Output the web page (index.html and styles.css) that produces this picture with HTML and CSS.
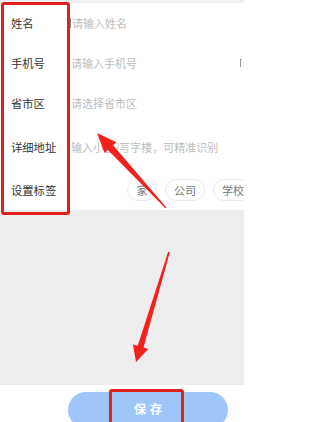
FILE: index.html
```html
<!DOCTYPE html>
<html lang="zh-CN">
<head>
<meta charset="utf-8">
<link rel="stylesheet" href="styles.css">
</head>
<body>
<div class="page">
  <div class="topbar"></div>
  <div class="form">
    <div class="row"><span class="label">姓名</span><span class="caret"></span><span class="ph">请输入姓名</span></div>
    <div class="row"><span class="label">手机号</span><span class="ph">请输入手机号</span><span class="edge"></span></div>
    <div class="row"><span class="label">省市区</span><span class="ph">请选择省市区</span></div>
    <div class="row tall"><span class="label">详细地址</span><span class="ph">输入小区/写字楼，可精准识别</span></div>
    <div class="row"><span class="label">设置标签</span>
      <div class="tags"><span class="tag">家</span><span class="tag">公司</span><span class="tag">学校</span></div>
    </div>
  </div>
  <div class="spacer"></div>
  <div class="footer"><button class="save">保存</button></div>

  <div class="mark mark-labels"></div>
  <div class="mark mark-save"></div>
  <svg class="arrows" width="244" height="422" viewBox="0 0 244 422">
    <polygon fill="#f2211c" points="97,133 116.4,142.3 113.1,145.3 166.4,207.6 165.6,208.4 107.9,150.1 104.6,153.1"/>
    <polygon fill="#f2211c" points="136,362 148.3,349 143.5,347.6 169.8,252.2 168.2,251.8 137.7,345.8 132.9,344.4"/>
  </svg>
</div>
</body>
</html>
```
FILE: styles.css
```css
* { box-sizing: border-box; }
html, body { margin: 0; padding: 0; overflow: hidden; }
body {
  width: 244px;
  height: 422px;
  font-family: "Noto Sans CJK SC", "Noto Sans", sans-serif;
  background: #fff;
}
.page {
  position: relative;
  width: 244px;
  height: 422px;
  overflow: hidden;
  display: flex;
  flex-direction: column;
}
.topbar { height: 3px; background: #efeff1; flex: none; }
.form { background: #fff; flex: none; }
.row {
  height: 40px;
  display: flex;
  align-items: center;
  padding-left: 11px;
  font-size: 11px;
  white-space: nowrap;
}
.row.tall { height: 47px; }
.label { width: 60px; color: #333; flex: none; font-size: 11.3px; }
.ph { color: #bdbdbd; }
.caret { width: 1px; height: 10px; background: #888; margin-right: 1px; margin-left: -1px; }
.edge {
  margin-left: auto;
  margin-right: 2px;
  width: 2px;
  height: 8px;
  border-left: 1px solid #999;
  border-top: 1px solid #999;
}
.tags { display: flex; gap: 8px; margin-left: 56px; }
.tag {
  height: 22px;
  padding: 0 8px;
  border: 1px solid #ececec;
  border-radius: 11px;
  color: #777;
  display: flex;
  align-items: center;
  font-size: 11px;
  min-width: 30px;
  justify-content: center;
}
.spacer { flex: none; height: 175px; background: #ededf0; }
.footer { flex: 1; background: #fff; padding-top: 7px; padding-left: 68px; }
.save {
  width: 160px;
  height: 36px;
  border: none;
  border-radius: 18px;
  background: #9ec6f8;
  color: #fff;
  font-family: "Noto Sans CJK SC", sans-serif;
  font-size: 12px;
  font-weight: bold;
  letter-spacing: 4px;
  padding: 8px 0 0 4px;
  display: flex;
  justify-content: center;
}
.mark {
  position: absolute;
  border: 3px solid #e0201e;
  border-radius: 3px;
}
.mark-labels { left: 1px; top: 2px; width: 69px; height: 213px; }
.mark-save { left: 109px; top: 389px; width: 75px; height: 40px; }
.arrows { position: absolute; left: 0; top: 0; }
```
